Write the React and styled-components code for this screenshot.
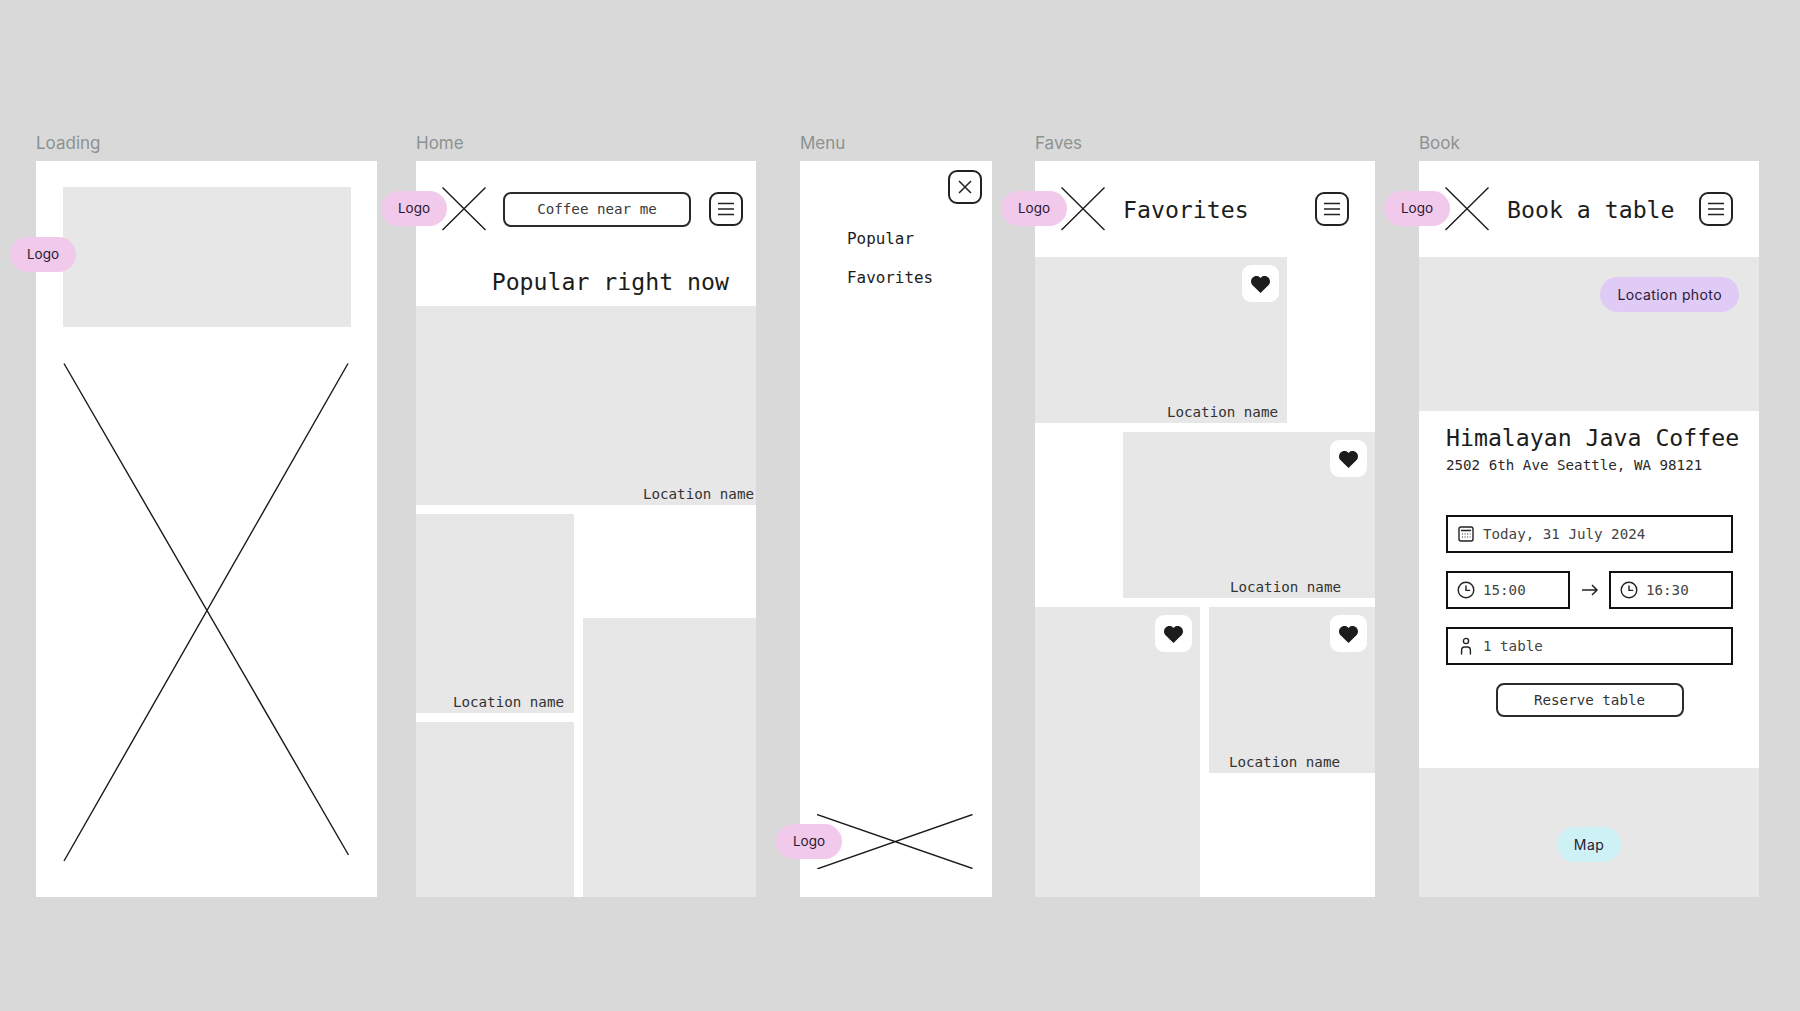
import React from 'react';
import styled, {createGlobalStyle} from 'styled-components';

const Global = createGlobalStyle`
  html, body {
    margin: 0;
    background: #d9d9d9;
  }
  * { box-sizing: border-box; }
`;

const mono = `"DejaVu Sans Mono", monospace`;
const sans = `Inter, "Noto Sans", sans-serif`;

const Board = styled.div`
  display: flex;
  height: 1011px;
  overflow: hidden;
  padding: 131px 0 0 36px;
  background: #d9d9d9;
`;

const Column = styled.section`
  flex: none;
  width: ${p => p.$width || 340.5}px;
  margin-right: ${p => p.$after || 0}px;
`;

const Label = styled.div`
  height: 24px;
  margin-bottom: 6px;
  font: 400 17px/24px ${sans};
  color: #8d9292;
`;

const Screen = styled.div`
  position: relative;
  display: flex;
  flex-direction: column;
  height: 736px;
  background: #fff;
`;

const Pill = styled.div`
  display: flex;
  align-items: center;
  justify-content: center;
  height: 35px;
  padding: 0 17px;
  border-radius: 18px;
  font: 400 14px/1 ${sans};
  letter-spacing: 0.4px;
  color: #2a1838;
  background: ${p => p.$color};
`;

const LogoPill = styled(Pill)`
  position: absolute;
  left: ${p => p.$left}px;
  top: ${p => p.$top}px;
  z-index: 2;
  width: 66px;
  padding: 0;
  font-size: 13.5px;
  letter-spacing: 0;
`;

/* Loading */
const LoadingBody = styled.div`
  display: flex;
  flex-direction: column;
  padding: 26px 26px 0 27px;
`;

const Placeholder = styled.div`
  height: 140px;
  background: #e7e7e7;
`;

const BigCross = styled.svg`
  display: block;
  margin-top: 36px;
`;

/* headers */
const Header = styled.header`
  display: flex;
  align-items: center;
  flex: none;
  height: 96px;
  padding: 0 ${p => p.$right || 26}px 0 26px;
`;

const LogoMark = styled.div`
  position: relative;
  flex: none;
  width: 44px;
  height: 44px;
`;

const Title = styled.h1`
  flex: 1;
  margin: 0 0 0 18px;
  font: 400 23.2px/27px ${mono};
  color: #1c1c1c;
`;

const SearchBox = styled.div`
  display: flex;
  align-items: center;
  justify-content: center;
  flex: none;
  width: 188px;
  height: 35px;
  margin: 0 18px 0 17px;
  border: 2px solid #2a2a2a;
  border-radius: 8px;
  font: 400 14.2px/1 ${mono};
  color: #3a3a3a;
`;

const IconButton = styled.button`
  display: flex;
  align-items: center;
  justify-content: center;
  flex: none;
  width: 34px;
  height: 34px;
  padding: 0;
  border: 2px solid #222;
  border-radius: 9px;
  background: #fff;
`;

const Hamburger = () => (
  <IconButton aria-label="Menu">
    <svg width="18" height="14" viewBox="0 0 18 14" fill="none" stroke="#222" strokeWidth="1.6">
      <path d="M1 1.5h16M1 7h16M1 12.5h16" />
    </svg>
  </IconButton>
);

const Logo = ({left = -61}) => (
  <LogoMark>
    <LogoPill $color="#f1c9ea" $left={left} $top={4}>Logo</LogoPill>
    <svg width="44" height="44" viewBox="0 0 44 44" fill="none" stroke="#1a1a1a" strokeWidth="1.4">
      <path d="M0.5 0.5L43.5 43M43.5 0.5L0.5 43" />
    </svg>
  </LogoMark>
);

/* tiles */
const Tile = styled.div`
  position: relative;
  display: flex;
  flex-direction: column;
  align-items: flex-end;
  justify-content: flex-end;
  flex: ${p => p.$grow ? '1 1 auto' : 'none'};
  width: ${p => p.$w ? `${p.$w}px` : 'auto'};
  height: ${p => p.$h ? `${p.$h}px` : 'auto'};
  margin-top: ${p => p.$top || 0}px;
  padding: 0 ${p => p.$pad || 0}px 3px 0;
  align-self: ${p => p.$end ? 'flex-end' : 'auto'};
  background: #e7e7e7;
`;

const LocationName = styled.span`
  font: 400 14.2px/16px ${mono};
  color: #333;
`;

const HeartButton = styled.button`
  position: absolute;
  top: 8px;
  right: 8px;
  display: flex;
  align-items: center;
  justify-content: center;
  width: 37px;
  height: 37px;
  padding: 1px 0 0;
  border: 0;
  border-radius: 9px;
  background: #fff;
`;

const Heart = () => (
  <HeartButton aria-label="Favorite">
    <svg width="19" height="17" viewBox="0 0 19 17">
      <path fill="#1c1c1c" d="M9.5 17L1.6 9.3C-0.5 7.2-0.5 3.8 1.5 1.7 3.6-0.5 6.9-0.5 9 1.5L9.5 2 10 1.5C12.1-0.5 15.4-0.5 17.5 1.7 19.5 3.8 19.5 7.2 17.4 9.3Z" />
    </svg>
  </HeartButton>
);

/* home */
const HomeHeading = styled.h2`
  flex: none;
  height: 49px;
  margin: 0;
  padding-right: 27px;
  text-align: right;
  font: 400 23.2px/49px ${mono};
  color: #1c1c1c;
`;

const TileRow = styled.div`
  display: flex;
  flex: 1;
  gap: 9px;
  min-height: 0;
  margin-top: ${p => p.$top || 0}px;
`;

const TileStack = styled.div`
  display: flex;
  flex-direction: column;
  flex: none;
  width: ${p => p.$w}px;
  padding-top: ${p => p.$top || 0}px;
`;

/* menu */
const CloseSlot = styled.div`
  display: flex;
  justify-content: flex-end;
  padding: 9px 10px 0 0;
`;

const Nav = styled.nav`
  display: flex;
  flex-direction: column;
  gap: 18.5px;
  margin-top: 25px;
  padding-left: 47px;
`;

const NavItem = styled.a`
  font: 400 15.9px/20px ${mono};
  color: #1c1c1c;
`;

const MenuCross = styled.div`
  position: relative;
  width: 156px;
  height: 55px;
  margin: auto 0 28px 17px;
`;

/* book */
const Photo = styled.div`
  display: flex;
  justify-content: flex-end;
  align-items: flex-start;
  flex: none;
  height: 154px;
  padding: 20px 20px 0 0;
  background: #e7e7e7;
`;

const BookBody = styled.div`
  display: flex;
  flex-direction: column;
  flex: none;
  height: 357px;
  padding: 13px 26px 0 27px;
`;

const PlaceName = styled.h2`
  margin: 0;
  white-space: nowrap;
  font: 400 23.2px/28px ${mono};
  color: #1c1c1c;
`;

const Address = styled.p`
  margin: 4px 0 41px;
  font: 400 14.2px/18px ${mono};
  color: #2a2a2a;
`;

const FieldRow = styled.div`
  display: flex;
  align-items: center;
  justify-content: space-between;
  margin-bottom: 18px;
`;

const Field = styled.div`
  display: flex;
  align-items: center;
  gap: 8px;
  width: ${p => p.$w ? `${p.$w}px` : '100%'};
  height: 38px;
  padding-left: 9px;
  border: 2px solid #111;
  font: 400 14.2px/1 ${mono};
  color: #444;
`;

const ReserveButton = styled.button`
  align-self: center;
  width: 188px;
  height: 34px;
  padding: 0;
  border: 2px solid #2a2a2a;
  border-radius: 8px;
  background: #fff;
  font: 400 14.2px/1 ${mono};
  color: #333;
`;

const MapArea = styled.div`
  display: flex;
  justify-content: center;
  flex: 1;
  padding-top: 59px;
  background: #e7e7e7;
`;

const FieldIcon = ({children}) => (
  <svg width="18" height="18" viewBox="0 0 18 18" fill="none" stroke="#222" strokeWidth="1.4" strokeLinecap="round" style={{flex: 'none'}}>
    {children}
  </svg>
);

const CalendarIcon = () => (
  <FieldIcon>
    <rect x="2" y="2" width="14" height="14" rx="2" />
    <path d="M4.5 5.5h9" />
    <path strokeWidth="1.1" strokeDasharray="1 1.6" d="M5 9h8.5M5 12h8.5" strokeLinecap="butt" />
  </FieldIcon>
);

const ClockIcon = () => (
  <FieldIcon>
    <circle cx="9" cy="9" r="7.8" />
    <path d="M9 5v4.4h3.6" />
  </FieldIcon>
);

const PersonIcon = () => (
  <FieldIcon>
    <circle cx="9" cy="4" r="2.6" />
    <path d="M4.6 17v-3.6C4.6 11.2 6 10 7.6 10h2.8c1.6 0 3 1.2 3 3.4V17" />
  </FieldIcon>
);

const App = () => (
  <Board>
    <Global />

    <Column $after={39.5}>
      <Label>Loading</Label>
      <Screen>
        <LoadingBody>
          <LogoPill $color="#f1c9ea" $left={-26} $top={76}>Logo</LogoPill>
          <Placeholder />
          <BigCross width="287" height="500" viewBox="0 0 287 500" fill="none" stroke="#1a1a1a" strokeWidth="1.4">
            <path d="M1 0.5L285.5 492M285 0.5L1 498" />
          </BigCross>
        </LoadingBody>
      </Screen>
    </Column>

    <Column $width={340} $after={44}>
      <Label>Home</Label>
      <Screen>
        <Header $right={13}>
          <Logo />
          <SearchBox>Coffee near me</SearchBox>
          <Hamburger />
        </Header>
        <HomeHeading>Popular right now</HomeHeading>
        <Tile $h={199} $pad={2}>
          <LocationName>Location name</LocationName>
        </Tile>
        <TileRow>
          <TileStack $w={158} $top={9}>
            <Tile $h={199} $pad={10}>
              <LocationName>Location name</LocationName>
            </Tile>
            <Tile $grow $top={9} />
          </TileStack>
          <TileStack $w={173} $top={113}>
            <Tile $grow />
          </TileStack>
        </TileRow>
      </Screen>
    </Column>

    <Column $width={192} $after={43}>
      <Label>Menu</Label>
      <Screen>
        <CloseSlot>
          <IconButton aria-label="Close">
            <svg width="16" height="16" viewBox="0 0 16 16" fill="none" stroke="#222" strokeWidth="1.5">
              <path d="M2 2l12 12M14 2L2 14" />
            </svg>
          </IconButton>
        </CloseSlot>
        <Nav>
          <NavItem>Popular</NavItem>
          <NavItem>Favorites</NavItem>
        </Nav>
        <MenuCross>
          <LogoPill $color="#f1c9ea" $left={-41} $top={10}>Logo</LogoPill>
          <svg width="156" height="55" viewBox="0 0 156 55" fill="none" stroke="#1a1a1a" strokeWidth="1.4">
            <path d="M0 0.5L155.5 54.5M155.5 0.5L0 55" />
          </svg>
        </MenuCross>
      </Screen>
    </Column>

    <Column $width={340} $after={44}>
      <Label>Faves</Label>
      <Screen>
        <Header>
          <Logo left={-60} />
          <Title>Favorites</Title>
          <Hamburger />
        </Header>
        <Tile $w={252} $h={166} $pad={9}>
          <Heart />
          <LocationName>Location name</LocationName>
        </Tile>
        <Tile $w={252} $h={166} $top={9} $pad={34} $end>
          <Heart />
          <LocationName>Location name</LocationName>
        </Tile>
        <TileRow $top={9}>
          <TileStack $w={165}>
            <Tile $grow>
              <Heart />
            </Tile>
          </TileStack>
          <TileStack $w={166}>
            <Tile $h={166} $pad={35}>
              <Heart />
              <LocationName>Location name</LocationName>
            </Tile>
          </TileStack>
        </TileRow>
      </Screen>
    </Column>

    <Column $width={340}>
      <Label>Book</Label>
      <Screen>
        <Header>
          <Logo />
          <Title>Book a table</Title>
          <Hamburger />
        </Header>
        <Photo>
          <Pill $color="#dfcbf5">Location photo</Pill>
        </Photo>
        <BookBody>
          <PlaceName>Himalayan Java Coffee</PlaceName>
          <Address>2502 6th Ave Seattle, WA 98121</Address>
          <FieldRow>
            <Field><CalendarIcon />Today, 31 July 2024</Field>
          </FieldRow>
          <FieldRow>
            <Field $w={124}><ClockIcon />15:00</Field>
            <svg width="18" height="14" viewBox="0 0 18 14" fill="none" stroke="#222" strokeWidth="1.5">
              <path d="M1 7h15M11 2l5 5-5 5" />
            </svg>
            <Field $w={124}><ClockIcon />16:30</Field>
          </FieldRow>
          <FieldRow>
            <Field><PersonIcon />1 table</Field>
          </FieldRow>
          <ReserveButton>Reserve table</ReserveButton>
        </BookBody>
        <MapArea>
          <Pill $color="#cdf1f5">Map</Pill>
        </MapArea>
      </Screen>
    </Column>
  </Board>
);

export default App;
